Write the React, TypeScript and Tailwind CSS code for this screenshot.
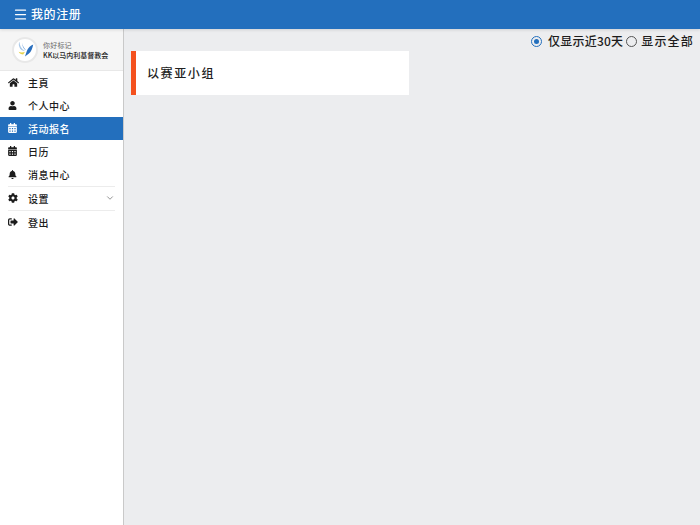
import React from 'react';
import { FaBell, FaCalendarAlt, FaCog, FaHome, FaSignOutAlt, FaUser } from 'react-icons/fa';
import { ChevronDown, Menu } from 'lucide-react';

const cjk = "font-['Noto_Sans_CJK_SC','Noto_Sans',sans-serif]";

const Logo: React.FC = () => (
  <div className="flex h-[26px] w-[26px] shrink-0 items-center justify-center rounded-full border-2 border-[#e8e8e8] bg-white">
    <svg viewBox="0 0 24 24" className="h-[22px] w-[22px]">
      <path d="M6 3c0 4 2 8 6 10-3 0-5-1-6-4-1-2-1-4 0-6Z" fill="#a9c8e8" />
      <path d="M9 4c0 3 2 6 4 8-2-1-4-3-4-8Z" fill="#5d97d6" />
      <path d="M21 6c-3 1-6 4-7 7l-2 6 4-3c3-2 4-6 5-10Z" fill="#2a6fbe" />
      <path d="M5 14c2 1 5 1 7 0l-2 3c-2 0-4-1-5-3Z" fill="#e8d44a" />
    </svg>
  </div>
);

type NavItem = {
  label: string;
  icon: React.ReactNode;
  active?: boolean;
  divider?: boolean;
  chevron?: boolean;
};

const items: NavItem[] = [
  { label: '主頁', icon: <FaHome className="h-[11px] w-[11px]" /> },
  { label: '个人中心', icon: <FaUser className="h-[9px] w-[9px]" /> },
  { label: '活动报名', icon: <FaCalendarAlt className="h-[10px] w-[9px]" />, active: true },
  { label: '日历', icon: <FaCalendarAlt className="h-[10px] w-[9px]" /> },
  { label: '消息中心', icon: <FaBell className="h-[9px] w-[9px]" /> },
  { label: '设置', icon: <FaCog className="h-[10px] w-[10px]" />, divider: true, chevron: true },
  { label: '登出', icon: <FaSignOutAlt className="h-[10px] w-[10px]" />, divider: true },
];

const Radio: React.FC<{ label: string; checked?: boolean }> = ({ label, checked }) => (
  <label className="flex items-center">
    {checked ? (
      <span className="mr-[6px] flex h-[11px] w-[11px] items-center justify-center rounded-full border-[1.5px] border-[#236fbd]">
        <span className="h-[5px] w-[5px] rounded-full bg-[#236fbd]" />
      </span>
    ) : (
      <span className="mr-[4px] h-[11px] w-[11px] rounded-full border border-[#555555]" />
    )}
    <span
      className={`text-[12px] leading-4 font-medium text-[#1c1c1c] ${
        checked ? 'tracking-[0.2px]' : 'tracking-[1.2px]'
      }`}
    >
      {label}
    </span>
  </label>
);

const App: React.FC = () => (
  <div className={`flex h-[525px] w-[700px] flex-col overflow-hidden bg-[#ecedef] ${cjk}`}>
    <header className="relative z-10 flex h-[29px] shrink-0 items-center bg-[#236fbd] pb-[1px] pl-[13px] text-white shadow-[0_1px_3px_rgba(0,0,0,0.12)]">
      <Menu className="mr-[3px] h-[15px] w-[15px]" strokeWidth={2} />
      <span className="text-[12px] font-medium tracking-[0.6px]">我的注册</span>
    </header>
    <div className="flex min-h-0 flex-1">
      <aside className="flex w-[124px] shrink-0 flex-col border-r border-[#c9c9c9] bg-white">
        <div className="flex h-[42px] items-center border-b border-[#e8e8e8] bg-[#f5f5f5] pl-[12px]">
          <Logo />
          <div className="ml-[5px] flex flex-col">
            <span className="text-[7px] leading-[10px] tracking-[0.2px] text-[#666666]">你好标记</span>
            <span className="text-[7px] leading-[10px] font-medium whitespace-nowrap text-[#222222]">KK以马内利基督教会</span>
          </div>
        </div>
        <nav className="flex flex-col">
          {items.map((item) => (
            <div key={item.label} className={item.divider ? 'mx-[8px] border-t border-[#ececec]' : ''}>
              <div
                className={`flex h-[23px] items-center pb-[1px] ${item.divider ? '' : 'pl-[8px]'} ${
                  item.active ? 'bg-[#236fbd] text-white' : 'text-[#1c1c1c]'
                }`}
              >
                <span className="flex w-[20px] shrink-0 items-center">{item.icon}</span>
                <span className="text-[10px] font-medium tracking-[0.5px]">{item.label}</span>
                {item.chevron && <ChevronDown className="ml-auto h-[10px] w-[10px] text-[#555555]" strokeWidth={1.5} />}
              </div>
            </div>
          ))}
        </nav>
      </aside>
      <main className="min-w-0 flex-1">
        <div className="flex h-[22px] items-center justify-end gap-[3px] pt-[2px] pr-[6px]">
          <Radio label="仅显示近30天" checked />
          <Radio label="显示全部" />
        </div>
        <div className="ml-[7px] flex h-[44px] w-[278px] items-center border-l-[5px] border-[#f4511e] bg-white pb-[1px] pl-[11px]">
          <span className="text-[12px] font-medium tracking-[1.6px] text-[#222222]">以赛亚小组</span>
        </div>
      </main>
    </div>
  </div>
);

export default App;
